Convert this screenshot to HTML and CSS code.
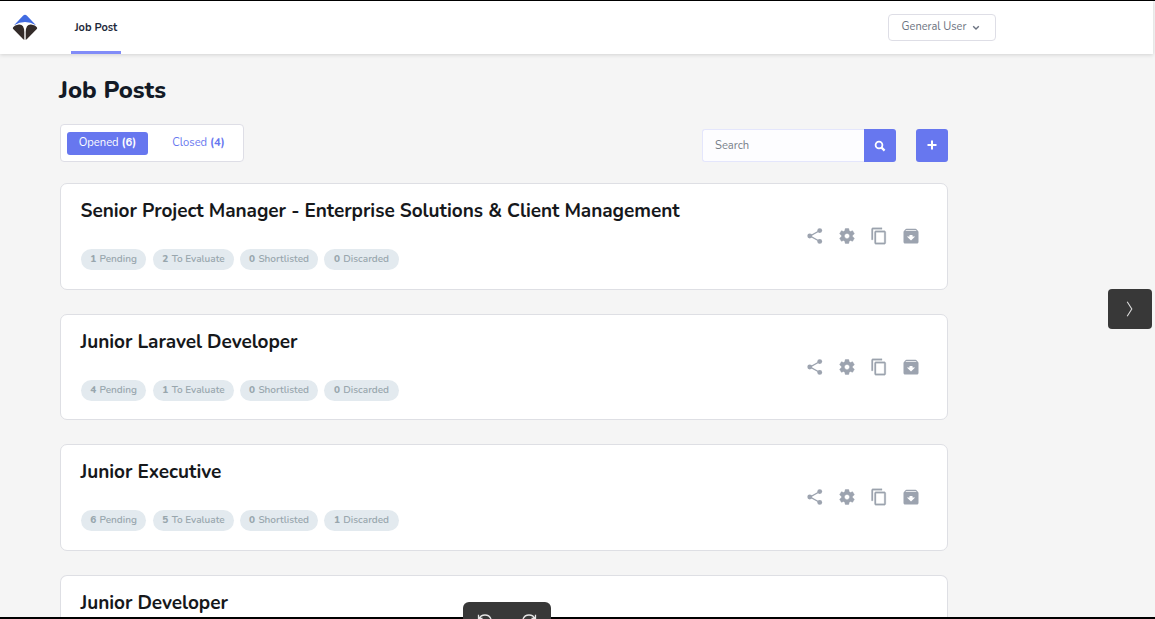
FILE: index.html
```
<!DOCTYPE html>
<html lang="en">
<head>
<meta charset="utf-8">
<title>Job Posts</title>
<link rel="stylesheet" href="styles.css">
</head>
<body>
<svg class="defs" aria-hidden="true">
  <symbol id="share" viewBox="0 0 24 24"><path d="M18 5 5.500 12 18 19" fill="none" stroke="currentColor" stroke-width="1.900"/><circle cx="18.300" cy="4.800" r="3.200"/><circle cx="5" cy="12" r="3.200"/><circle cx="18.300" cy="19.200" r="3.200"/></symbol>
  <symbol id="gear" viewBox="0 0 24 24"><path d="M19.430 12.980c.04-.32.07-.64.07-.98s-.03-.66-.07-.98l2.110-1.650c.19-.15.24-.42.12-.64l-2-3.460c-.12-.22-.39-.3-.61-.22l-2.490 1c-.52-.4-1.080-.73-1.690-.98l-.38-2.650C14.460 2.180 14.250 2 14 2h-4c-.25 0-.46.18-.49.42l-.38 2.650c-.61.25-1.170.59-1.690.98l-2.490-1c-.23-.09-.49 0-.61.22l-2 3.460c-.13.22-.07.49.12.64l2.110 1.650c-.04.32-.07.65-.07.98s.03.66.07.98l-2.110 1.650c-.19.15-.24.42-.12.64l2 3.460c.12.22.39.3.61.22l2.490-1c.52.4 1.080.73 1.690.98l.38 2.650c.03.24.24.42.49.42h4c.25 0 .46-.18.49-.42l.38-2.650c.61-.25 1.170-.59 1.690-.98l2.490 1c.23.09.49 0 .61-.22l2-3.460c.12-.22.07-.49-.12-.64l-2.110-1.650zM12 15.500c-1.930 0-3.500-1.570-3.500-3.500s1.570-3.500 3.500-3.500 3.500 1.570 3.500 3.500-1.570 3.500-3.500 3.500z" stroke="currentColor" stroke-width=".6"/></symbol>
  <symbol id="copy" viewBox="0 0 24 24"><path d="M16 1H4c-1.100 0-2 .9-2 2v14h2V3h12V1zm3 4H8c-1.100 0-2 .9-2 2v14c0 1.100.9 2 2 2h11c1.100 0 2-.9 2-2V7c0-1.100-.9-2-2-2zm0 16H8V7h11v14z" stroke="currentColor" stroke-width=".4"/></symbol>
  <symbol id="archive" viewBox="0 0 24 24"><path fill-rule="evenodd" d="M20.800 4.500l-1.200-1.200C19.300 2.700 18.800 2.400 18 2.400H6c-.8 0-1.300.3-1.600.9L3.200 4.500C2.400 5.300 2 6 2 6.700V20c0 1.100.9 2 2 2h16c1.100 0 2-.9 2-2V6.700c0-.7-.4-1.400-1.200-2.200zM12 18 6.500 12.800H10v-2.300h4v2.300h3.500L12 18zM4.600 5.400l.9-1.200h13l.9 1.200z"/></symbol>
</svg>

<header class="navbar">
  <svg class="logo" viewBox="0 0 26 26"><path fill="#416be1" d="M13 .8Q14 .8 15 1.800L24 11.300Q18.500 8 13 8T2 11.300L11 1.800Q12 .8 13 .8Z"/><path fill="#332b29" d="M1 13.500Q2.500 11.300 7 10.600Q12.100 10.300 12.300 18V26Q11.700 25.800 11 25.100L1.200 15Q.5 14.300 1 13.500ZM25 13.500Q23.500 11.300 19 10.600Q13.900 10.300 13.700 18V26Q14.300 25.800 15 25.100L24.800 15Q25.500 14.300 25 13.500Z"/></svg>
  <a class="nav-link"><span class="nav-text">Job Post</span></a>
  <button class="user-menu"><span class="user-text">General User</span><svg class="chevron" viewBox="0 0 8 6"><path d="M1.200 1.300 4 4.100 6.800 1.300" fill="none" stroke="currentColor" stroke-width="1.400"/></svg></button>
</header>

<main class="content">
  <h1 class="page-title">Job Posts</h1>
  <div class="toolbar">
    <nav class="tabs">
      <a class="tab tab-active">Opened <b>(6)</b></a>
      <a class="tab">Closed <b>(4)</b></a>
    </nav>
    <div class="search">
      <div class="search-field">Search</div>
      <button class="search-button"><svg class="search-icon" viewBox="0 0 12 12"><circle cx="5" cy="5" r="3.400" fill="none" stroke="#fff" stroke-width="1.800"/><path d="m7.600 7.600 3 3" stroke="#fff" stroke-width="2.200"/></svg></button>
    </div>
    <button class="add-button"><svg class="plus-icon" viewBox="0 0 10 10"><path d="M5 .5v9M.5 5h9" stroke="#fff" stroke-width="2"/></svg></button>
  </div>

  <section class="cards">
    <article class="card">
      <div class="card-body">
        <h2 class="card-title">Senior Project Manager - Enterprise Solutions &amp; Client Management</h2>
        <div class="badges"><span class="badge pending"><b>1</b> Pending</span><span class="badge evaluate"><b>2</b> To Evaluate</span><span class="badge shortlisted"><b>0</b> Shortlisted</span><span class="badge discarded"><b>0</b> Discarded</span></div>
      </div>
      <div class="actions"><svg class="icon"><use href="#share"/></svg><svg class="icon"><use href="#gear"/></svg><svg class="icon"><use href="#copy"/></svg><svg class="icon"><use href="#archive"/></svg></div>
    </article>
    <article class="card">
      <div class="card-body">
        <h2 class="card-title">Junior Laravel Developer</h2>
        <div class="badges"><span class="badge pending"><b>4</b> Pending</span><span class="badge evaluate"><b>1</b> To Evaluate</span><span class="badge shortlisted"><b>0</b> Shortlisted</span><span class="badge discarded"><b>0</b> Discarded</span></div>
      </div>
      <div class="actions"><svg class="icon"><use href="#share"/></svg><svg class="icon"><use href="#gear"/></svg><svg class="icon"><use href="#copy"/></svg><svg class="icon"><use href="#archive"/></svg></div>
    </article>
    <article class="card">
      <div class="card-body">
        <h2 class="card-title">Junior Executive</h2>
        <div class="badges"><span class="badge pending"><b>6</b> Pending</span><span class="badge evaluate"><b>5</b> To Evaluate</span><span class="badge shortlisted"><b>0</b> Shortlisted</span><span class="badge discarded"><b>1</b> Discarded</span></div>
      </div>
      <div class="actions"><svg class="icon"><use href="#share"/></svg><svg class="icon"><use href="#gear"/></svg><svg class="icon"><use href="#copy"/></svg><svg class="icon"><use href="#archive"/></svg></div>
    </article>
    <article class="card card-last">
      <div class="card-body">
        <h2 class="card-title">Junior Developer</h2>
      </div>
    </article>
  </section>
</main>

<button class="next-button"><svg class="next-icon" viewBox="0 0 8 16"><path d="M1.200 .8 5.800 8 1.200 15.200" fill="none" stroke="#ddd" stroke-width="1.100"/></svg></button>
<div class="rotate-bar">
  <svg class="rotate-icon" viewBox="0 0 16 5"><path d="M2 5A6.500 6.500 0 0 1 14 5M1.500 .8V4.500H5.500" fill="none" stroke="#e5e5e5" stroke-width="1.300"/></svg>
  <svg class="rotate-icon" viewBox="0 0 16 5"><path d="M14 5A6.500 6.500 0 0 0 2 5M14.500 .8V4.500H10.500" fill="none" stroke="#e5e5e5" stroke-width="1.300"/></svg>
</div>
</body>
</html>
```
FILE: styles.css
```
* { box-sizing: border-box; }
html, body { height: 100%; }
body {
  margin: 0;
  height: 619px;
  overflow: hidden;
  background: #f5f5f5;
  border-top: 1px solid #000;
  border-bottom: 2px solid #000;
  font-family: Nunito, Lato, "Open Sans", sans-serif;
  color: #131a26;
}
button { border: 0; padding: 0; font: inherit; display: flex; align-items: center; justify-content: center; }
.defs { display: none; }
.navbar {
  display: flex;
  height: 53px;
  width: 1153px;
  padding-left: 12px;
  background: #fff;
  box-shadow: 0 1px 4px rgba(0, 0, 0, .14);
}
.logo { width: 26px; height: 26px; margin-top: 13px; }
.nav-link {
  width: 50px;
  height: 53px;
  margin-left: 33px;
  border-bottom: 3px solid #818cf8;
  text-align: center;
  font-size: 11px;
  font-weight: 700;
  line-height: 53px;
  color: #1e293b;
  white-space: nowrap;
}
.user-menu {
  width: 108px;
  height: 27px;
  margin: 13px 0 0 767px;
  border: 1px solid #dedee6;
  border-radius: 4px;
  background: #fff;
  color: #6b7280;
  font-size: 11px;
  gap: 6px;
  padding: 0 2px 2px 0;
  white-space: nowrap;
}
.chevron { width: 8px; height: 6px; margin-top: 3px; }
.content { width: 888px; margin-left: 60px; }
.page-title { margin: 20px 0 0 -1px; font-size: 24px; line-height: 32px; font-weight: 800; }
.toolbar { display: flex; align-items: flex-start; margin-top: 18px; height: 38px; }
.tabs {
  display: flex;
  width: 184px;
  height: 38px;
  padding: 7px 6px;
  border: 1px solid #dedee6;
  border-radius: 4px;
  background: #fff;
  gap: 10px;
}
.tab {
  flex: none;
  width: 81px;
  height: 23px;
  border-radius: 3px;
  font-size: 11.200px;
  line-height: 22px;
  text-align: center;
  color: #6777ef;
  white-space: nowrap;
}
.tab-active { background: #6777ef; color: #fff; }
.search { display: flex; width: 194px; height: 33px; margin: 5px 0 0 458px; }
.search-field {
  width: 162px;
  border: 1px solid #e4e6fc;
  border-right: 0;
  border-radius: 3px 0 0 3px;
  background: #fdfdff;
  padding-left: 12px;
  font-size: 11.200px;
  line-height: 32px;
  color: #788089;
}
.search-button { width: 32px; background: #6777ef; border-radius: 0 3px 3px 0; }
.search-icon { width: 12px; height: 12px; }
.add-button { width: 32px; height: 33px; margin: 5px 0 0 20px; background: #6777ef; border-radius: 3px; }
.plus-icon { width: 10px; height: 10px; margin: 0 1px 1px 0; }
.cards { display: flex; flex-direction: column; gap: 24px; margin-top: 21px; }
.card {
  display: flex;
  justify-content: space-between;
  flex: none;
  height: 106.600px;
  border: 1px solid #dedfe4;
  border-radius: 7px;
  background: #fff;
}
.card-last { height: 42.200px; border-bottom: 0; border-radius: 7px 7px 0 0; }
.card-body { padding: 13px 0 0 20px; }
.card-title { margin: 0 0 0 -.5px; font-size: 19px; line-height: 28px; font-weight: 700; letter-spacing: -.045px; white-space: nowrap; color: #16181b; }
.card-last .card-title { line-height: 29px; }
.badges { display: flex; margin-top: 24px; }
.badge {
  height: 21px;
  border-radius: 11px;
  background: #e3eaef;
  color: #98a6ad;
  font-size: 10px;
  font-weight: 600;
  line-height: 20px;
  text-align: center;
  white-space: nowrap;
}
.badge b { font-weight: 800; margin-right: .7px; }
.pending { width: 65px; margin-right: 7px; }
.evaluate { width: 81px; margin-right: 6px; }
.shortlisted { width: 78px; margin-right: 6px; }
.discarded { width: 75px; }
.actions { display: flex; gap: 14px; padding: 43px 27px 0 0; }
.icon { width: 18px; height: 18px; color: #9ca3af; fill: currentColor; }
.next-button {
  position: absolute;
  left: 1108px;
  top: 289px;
  width: 44px;
  height: 40px;
  border-radius: 4px;
  background: #383838;
}
.next-icon { width: 8px; height: 16px; }
.rotate-bar {
  position: absolute;
  left: 463px;
  top: 602px;
  width: 88px;
  height: 17px;
  border-radius: 6px 6px 0 0;
  background: #383838;
  display: flex;
  justify-content: space-between;
  padding: 12px 14px 0;
}
.rotate-icon { width: 16px; height: 5px; flex: none; }
```
